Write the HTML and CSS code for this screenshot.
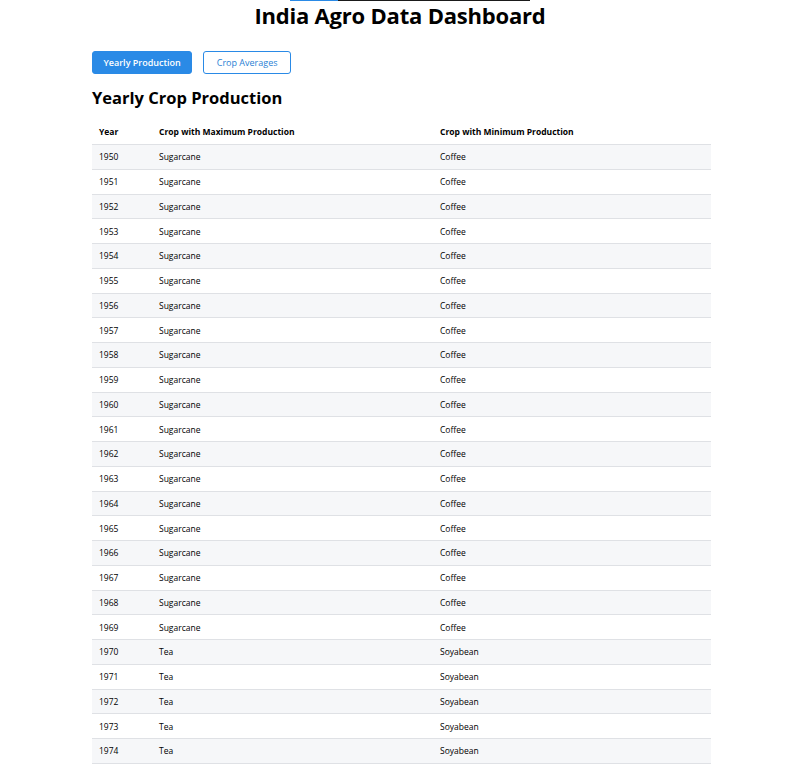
FILE: index.html
```html
<!DOCTYPE html>
<html>
<head>
<meta charset="utf-8">
<link rel="stylesheet" href="styles.css">
</head>
<body>
<div class="topbar"><span class="topbar-fill"></span></div>
<h1 class="title">India Agro Data Dashboard</h1>
<main class="container">
  <div class="tabs">
    <button class="tab active">Yearly Production</button>
    <button class="tab">Crop Averages</button>
  </div>
  <h2 class="section-title">Yearly Crop Production</h2>
  <table class="data">
    <thead>
      <tr><th class="c-year">Year</th><th class="c-max">Crop with Maximum Production</th><th>Crop with Minimum Production</th></tr>
    </thead>
    <tbody>
      <tr><td>1950</td><td>Sugarcane</td><td>Coffee</td></tr>
      <tr><td>1951</td><td>Sugarcane</td><td>Coffee</td></tr>
      <tr><td>1952</td><td>Sugarcane</td><td>Coffee</td></tr>
      <tr><td>1953</td><td>Sugarcane</td><td>Coffee</td></tr>
      <tr><td>1954</td><td>Sugarcane</td><td>Coffee</td></tr>
      <tr><td>1955</td><td>Sugarcane</td><td>Coffee</td></tr>
      <tr><td>1956</td><td>Sugarcane</td><td>Coffee</td></tr>
      <tr><td>1957</td><td>Sugarcane</td><td>Coffee</td></tr>
      <tr><td>1958</td><td>Sugarcane</td><td>Coffee</td></tr>
      <tr><td>1959</td><td>Sugarcane</td><td>Coffee</td></tr>
      <tr><td>1960</td><td>Sugarcane</td><td>Coffee</td></tr>
      <tr><td>1961</td><td>Sugarcane</td><td>Coffee</td></tr>
      <tr><td>1962</td><td>Sugarcane</td><td>Coffee</td></tr>
      <tr><td>1963</td><td>Sugarcane</td><td>Coffee</td></tr>
      <tr><td>1964</td><td>Sugarcane</td><td>Coffee</td></tr>
      <tr><td>1965</td><td>Sugarcane</td><td>Coffee</td></tr>
      <tr><td>1966</td><td>Sugarcane</td><td>Coffee</td></tr>
      <tr><td>1967</td><td>Sugarcane</td><td>Coffee</td></tr>
      <tr><td>1968</td><td>Sugarcane</td><td>Coffee</td></tr>
      <tr><td>1969</td><td>Sugarcane</td><td>Coffee</td></tr>
      <tr><td>1970</td><td>Tea</td><td>Soyabean</td></tr>
      <tr><td>1971</td><td>Tea</td><td>Soyabean</td></tr>
      <tr><td>1972</td><td>Tea</td><td>Soyabean</td></tr>
      <tr><td>1973</td><td>Tea</td><td>Soyabean</td></tr>
      <tr><td>1974</td><td>Tea</td><td>Soyabean</td></tr>
    </tbody>
  </table>
</main>
</body>
</html>
```
FILE: styles.css
```css
html, body {
  margin: 0;
  padding: 0;
  background: #fff;
  color: #000;
  font-family: "Open Sans", "Noto Sans", sans-serif;
}
.topbar {
  width: 240px;
  height: 1px;
  margin: 0 0 0 290px;
  background: #1a1a1a;
  display: flex;
}
.topbar-fill {
  width: 48px;
  background: #2a8ae6;
}
.title {
  margin: 0;
  text-align: center;
  font-size: 22px;
  line-height: 29px;
  font-weight: 700;
  letter-spacing: -0.2px;
}
.container {
  width: 619px;
  margin: 0 0 0 92px;
}
.tabs {
  display: flex;
  gap: 11px;
  margin-top: 21px;
}
.tab {
  font-family: inherit;
  font-size: 9px;
  height: 23px;
  padding: 0 12.5px;
  border-radius: 3px;
  border: 1px solid #2a8ae6;
  background: #fff;
  color: #2a7fd4;
  cursor: pointer;
}
.tab.active {
  background: #2a8ae6;
  color: #fff;
  font-weight: 600;
  padding: 0 10.5px;
}
.section-title {
  margin: 14px 0 11px;
  font-size: 16.5px;
  line-height: 20px;
  font-weight: 700;
}
.data {
  width: 100%;
  border-collapse: collapse;
  font-size: 8.5px;
}
.data th {
  text-align: left;
  font-weight: 700;
  padding: 0 7px;
  height: 25px;
  border-bottom: 1px solid #dfe1e5;
}
.data td {
  padding: 0 7px;
  height: 23.75px;
  border-bottom: 1px solid #dfe1e5;
}
.data tbody tr:nth-child(odd) {
  background: #f6f7f9;
}
.c-year { width: 46px; }
.c-max { width: 267px; }
```
